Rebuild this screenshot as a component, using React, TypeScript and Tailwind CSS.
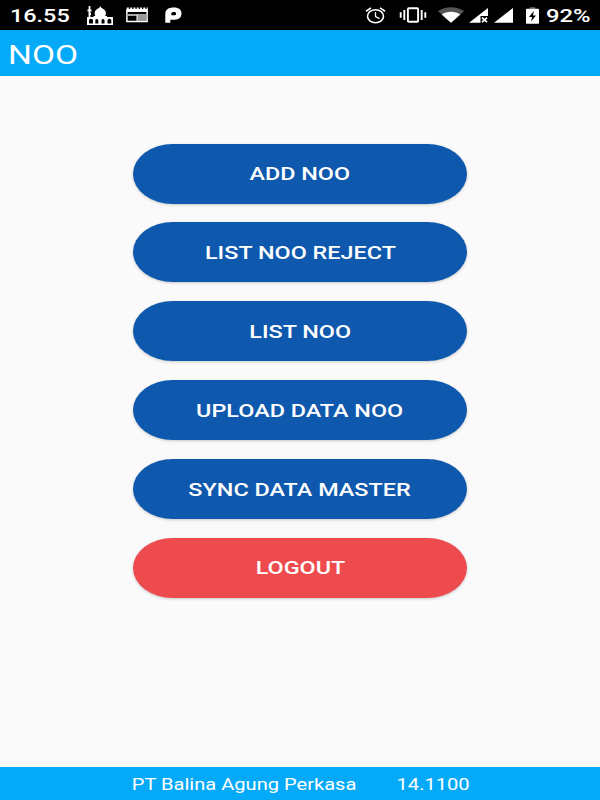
import React from "react";

const actions = [
  { label: "ADD NOO", color: "bg-[#0e58ad]" },
  { label: "LIST NOO REJECT", color: "bg-[#0e58ad]" },
  { label: "LIST NOO", color: "bg-[#0e58ad]" },
  { label: "UPLOAD DATA NOO", color: "bg-[#0e58ad]" },
  { label: "SYNC DATA MASTER", color: "bg-[#0e58ad]" },
  { label: "LOGOUT", color: "bg-[#ee4b4e]" },
];

function MosqueIcon() {
  return (
    <svg className="ml-[17px] h-[19px] w-[26px]" viewBox="0 0 26 19">
      <path d="M2.500 0v12M.5 4.500h4M1.500 8h2.500" stroke="#fff" strokeWidth="1.800" />
      <path d="M13.300 0c.5 1.600 1.300 2 3 3 3 1.800 3.400 5 1.300 8H9C6.900 8 7.300 4.800 10.300 3c1.700-1 2.500-1.400 3-3z" fill="#fff" />
      <path d="M0 11h6.500v-1H20v1h6v8H0zM2 17.500h4V14q-2-2.500-4 0zM8.300 17.500h3V14q-1.500-2.200-3 0zM14.500 17.500h3V14q-1.500-2.200-3 0zM20.500 17.500h3.800V14q-1.900-2.500-3.800 0z" fill="#fff" fillRule="evenodd" />
    </svg>
  );
}

function CalendarIcon() {
  return (
    <svg className="ml-[13px] h-[16px] w-[22px]" viewBox="0 0 22 16">
      <path d="M.9 4v10.400h20.200V4" fill="none" stroke="#fff" strokeWidth="1.500" />
      <path d="M.2 2h21.600v3H.2z" fill="#fff" />
      <path d="M.8 1.200h21" stroke="#fff" strokeWidth="1.500" strokeDasharray="2 1.300" />
      <path d="M2 8h18" stroke="#fff" strokeWidth="1.300" />
      <path d="M11 8h9v6h-9z" fill="#999" />
      <path d="M11 8v6" stroke="#fff" strokeWidth="1" />
    </svg>
  );
}

function PIcon() {
  return (
    <svg className="ml-[17px] h-[16px] w-[17px]" viewBox="0 0 17 16">
      <path d="M.3 15.700V7C.3 2.500 3.500.5 9 .5c5 0 7.500 2.200 7.500 6s-2.500 6.200-7 6.200H5.300v3zM6.300 8.300h2.900c1.300 0 1.900-.6 1.900-1.600S10.400 5 9 5c-1.800 0-2.700.6-2.700 2z" fill="#fff" fillRule="evenodd" />
    </svg>
  );
}

function AlarmIcon() {
  return (
    <svg className="h-[17px] w-[21px]" viewBox="0 0 21 17" fill="none" stroke="#fff">
      <ellipse cx="10.500" cy="9.300" rx="8" ry="6.500" strokeWidth="1.600" />
      <path d="M10.500 5v4.600l4 2" strokeWidth="1.300" />
      <path d="M1 4.200 6 .9M20 4.200 15 .9" strokeWidth="1.700" />
    </svg>
  );
}

function VibrateIcon() {
  return (
    <svg className="ml-[13px] h-[16px] w-[28px]" viewBox="0 0 28 16" fill="none" stroke="#fff">
      <rect x="8.900" y="1.300" width="10.200" height="13.400" rx="1" strokeWidth="1.900" />
      <path d="M5.300 3v10M22.700 3v10M1.700 5.300v5.400M26.300 5.300v5.400" strokeWidth="1.900" />
    </svg>
  );
}

function WifiIcon() {
  return (
    <svg className="ml-[11px] h-[16px] w-[26px]" viewBox="0 0 26 16">
      <path d="M0 4.300C7-1.200 19-1.200 26 4.300L13 15.700z" fill="#555" />
      <path d="M3.700 7.500c5.200-3.800 13.400-3.800 18.600 0L13 15.700z" fill="#fff" />
    </svg>
  );
}

function SignalIcon({ off = false }: { off?: boolean }) {
  return (
    <svg className={off ? "ml-[5px] h-[15px] w-[20px]" : "ml-[5px] h-[15px] w-[20px]"} viewBox="0 0 20 15">
      <path d="M0 14.700 19 0v14.700z" fill="#fff" />
      {off && (
        <>
          <path d="M11.500 8H20v7h-8.500z" fill="#000" />
          <path d="m13 9.700 5 4.500m0-4.500-5 4.500" stroke="#fff" strokeWidth="1.700" />
        </>
      )}
    </svg>
  );
}

function BatteryIcon() {
  return (
    <svg className="ml-[12px] h-[17px] w-[13px]" viewBox="0 0 13 17">
      <path d="M3.800 0h5.400v2H3.800z" fill="#555" />
      <rect y="1.800" width="13" height="15" rx=".8" fill="#fff" />
      <path d="M7.800 4 3 10h3.200L5 14.500l5-6H7z" fill="#000" />
    </svg>
  );
}

export default function App() {
  return (
    <div className="flex h-[800px] w-[600px] flex-col overflow-hidden bg-[#fafafa] font-['Roboto',sans-serif] text-white">
      <div className="flex h-[30px] shrink-0 items-center bg-black">
        <div className="flex items-center pl-[10px]">
          <span className="flex w-[60px] pt-px">
            <span className="origin-left scale-x-[1.3] text-[18px] font-medium leading-none">16.55</span>
          </span>
          <MosqueIcon />
          <CalendarIcon />
          <PIcon />
        </div>
        <div className="ml-auto flex items-center pr-[10px]">
          <AlarmIcon />
          <VibrateIcon />
          <WifiIcon />
          <SignalIcon off />
          <SignalIcon />
          <BatteryIcon />
          <span className="ml-[7px] flex w-[44px] pt-px">
            <span className="origin-left scale-x-[1.32] text-[18px] font-medium leading-none">92%</span>
          </span>
        </div>
      </div>
      <header className="flex h-[46px] shrink-0 items-center bg-[#04a9f8] pl-[8px] pt-[5px]">
        <h1 className="origin-left scale-x-[1.34] text-[25px] leading-none">NOO</h1>
      </header>
      <main className="flex flex-1 flex-col items-center gap-[18.800px] pt-[67.700px]">
        {actions.map(({ label, color }) => (
          <button
            key={label}
            className={`flex h-[60px] w-[334px] shrink-0 items-center justify-center rounded-[40px/30px] pt-[1.500px] shadow-[0_1px_3px_rgba(0,0,0,0.2)] ${color}`}
          >
            <span className="scale-x-[1.3] whitespace-nowrap text-[18px] font-medium leading-none">{label}</span>
          </button>
        ))}
      </main>
      <footer className="flex h-[33px] shrink-0 items-center justify-center bg-[#04a9f8] pt-[2px]">
        <div className="flex scale-x-[1.255] gap-[32px] whitespace-nowrap pl-px text-[16px] leading-none">
          <span>PT Balina Agung Perkasa</span>
          <span>14.1100</span>
        </div>
      </footer>
    </div>
  );
}
